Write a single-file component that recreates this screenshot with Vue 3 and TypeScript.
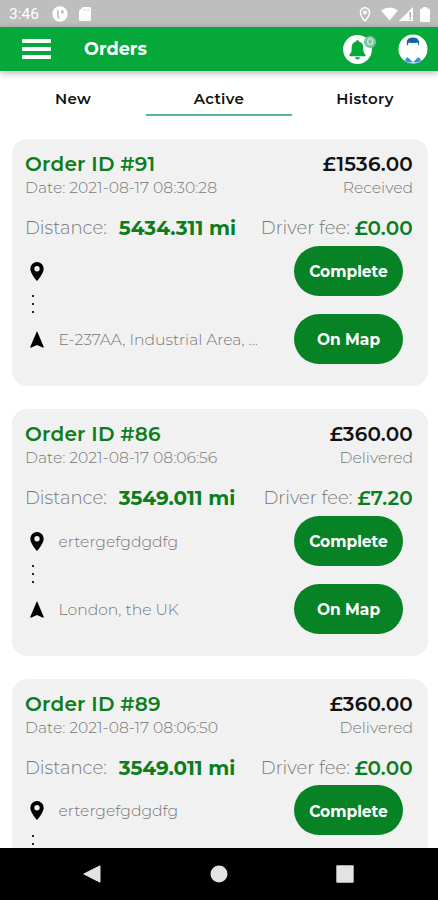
<script setup lang="ts">
interface Order {
  id: number
  date: string
  total: string
  status: string
  distance: string
  fee: string
  from: string
  to: string
}

const tabs: string[] = ['New', 'Active', 'History']
const activeTab = 'Active'

const orders: Order[] = [
  { id: 91, date: '2021-08-17 08:30:28', total: '£1536.00', status: 'Received', distance: '5434.311 mi', fee: '£0.00', from: '', to: 'E-237AA, Industrial Area, ...' },
  { id: 86, date: '2021-08-17 08:06:56', total: '£360.00', status: 'Delivered', distance: '3549.011 mi', fee: '£7.20', from: 'ertergefgdgdfg', to: 'London, the UK' },
  { id: 89, date: '2021-08-17 08:06:50', total: '£360.00', status: 'Delivered', distance: '3549.011 mi', fee: '£0.00', from: 'ertergefgdgdfg', to: '' },
]
</script>

<template>
  <div class="screen">
    <div class="status-bar">
      <span class="clock">3:46</span>
      <svg class="st-app" viewBox="0 0 16 16"><circle cx="8" cy="8" r="7.7" fill="#fff" /><path d="M5.800 4v5.500q0 2 1.700 2.800" fill="none" stroke="#bebebe" stroke-width="1.600" /><path d="M9 4.300h1.300q1.700 0 1.700 1.600t-1.700 1.600H9z" fill="#bebebe" /></svg>
      <svg class="st-sd" viewBox="0 0 12 14"><path d="M4 0h6.500Q12 0 12 1.500v11q0 1.500-1.500 1.500h-9Q0 14 0 12.500V4z" fill="#fff" /><path d="M5 1.800v2M7.200 1.800v2M9.400 1.800v2" stroke="#d0d0d0" stroke-width="1" /></svg>
      <span class="spacer"></span>
      <svg class="st-loc" viewBox="0 0 12 15"><path d="M6 .8a4.600 4.600 0 0 0-4.600 4.700C1.400 9 6 14 6 14s4.600-5 4.600-8.500A4.600 4.600 0 0 0 6 .8z" fill="none" stroke="#fff" stroke-width="1.400" /><circle cx="6" cy="5.500" r="2" fill="#fff" /></svg>
      <svg class="st-wifi" viewBox="0 0 18 14"><path d="M0 3.200Q9-3.200 18 3.200L9 14z" fill="#fff" /></svg>
      <svg class="st-cell" viewBox="0 0 14 14"><path d="M14 0v14H0z" fill="#fff" /><path d="M11.300 5v5.500M11.300 11.500v1.500" stroke="#aaa" stroke-width="1.500" /></svg>
      <svg class="st-bat" viewBox="0 0 10 15"><path d="M3 0h4v1.500h1.500Q10 1.500 10 3v10.500q0 1.500-1.500 1.500h-7Q0 15 0 13.500V3q0-1.500 1.500-1.500H3z" fill="#fff" /></svg>
    </div>

    <header class="app-bar">
      <div class="burger"><i></i><i></i><i></i></div>
      <h1 class="title">Orders</h1>
      <div class="bell">
        <svg viewBox="0 0 29 29"><circle cx="14.500" cy="14.500" r="14.400" fill="#fff" /><path d="M14.500 5.300c-1 0-1.600.6-1.600 1.400C9.500 7.400 8.700 10.200 8.700 13c0 4-.7 5.300-2.200 6.500v1.800h16v-1.800c-1.500-1.200-2.200-2.500-2.200-6.500 0-2.800-.8-5.600-4.200-6.300 0-.8-.6-1.400-1.600-1.400zM12 22.300h5q-.5 2.300-2.500 2.300T12 22.300z" fill="#05a839" /></svg>
        <span class="count">0</span>
      </div>
      <svg class="avatar" viewBox="0 0 30 30"><circle cx="15" cy="15" r="14.500" fill="#fff" /><path d="M9.500 12C7.500 7 10 3.500 14 3.500c5-.8 8.500 2.500 6.800 8.500l-1.300-3.500q-4.500 1-8.800 0z" fill="#17639f" /><path d="M7 26.500l2-3.500 2.500 1.800 3.500 3.700 3.500-3.700L21 23l2 3.500q-1.500 1.500-4 2h-8q-2.500-.5-4-2z" fill="#3590df" /></svg>
    </header>

    <nav class="tabs">
      <div v-for="tab in tabs" :key="tab" class="tab" :class="{ active: tab === activeTab }">{{ tab }}</div>
    </nav>

    <main class="list">
      <article v-for="order in orders" :key="order.id" class="card">
        <div class="row head">
          <span class="order-id">Order ID #{{ order.id }}</span>
          <span class="total">{{ order.total }}</span>
        </div>
        <div class="row meta">
          <span class="date">Date: {{ order.date }}</span>
          <span class="state">{{ order.status }}</span>
        </div>
        <div class="row figures">
          <span class="label">Distance:</span>
          <span class="distance">{{ order.distance }}</span>
          <span class="label fee-label">Driver fee:</span>
          <span class="fee">{{ order.fee }}</span>
        </div>
        <div class="body">
          <div class="route">
            <div class="stop">
              <svg class="pin" viewBox="0 0 14 19"><path fill-rule="evenodd" d="M7 0a6.700 6.700 0 0 0-6.700 6.700C.3 11.700 7 19 7 19s6.700-7.300 6.700-12.300A6.700 6.700 0 0 0 7 0zm0 4a2.700 2.700 0 1 1 0 5.400 2.700 2.700 0 0 1 0-5.400z" /></svg>
              <span class="address">{{ order.from }}</span>
            </div>
            <div class="dots"><i></i><i></i><i></i></div>
            <div class="stop">
              <svg class="arrow" viewBox="0 0 14 17"><path d="M7 0l6.800 16-.7.800L7 14 .9 16.800.2 16z" /></svg>
              <span class="address">{{ order.to }}</span>
            </div>
          </div>
          <div class="actions">
            <button class="btn" type="button">Complete</button>
            <button v-if="order.to" class="btn" type="button">On Map</button>
          </div>
        </div>
      </article>
    </main>

    <footer class="nav-bar">
      <svg viewBox="0 0 18 18"><path d="M17 .8v16.400L.8 9z" fill="#e3e3e3" stroke="#e3e3e3" stroke-linejoin="round" /></svg>
      <svg viewBox="0 0 18 18"><circle cx="9" cy="9" r="8.500" fill="#e3e3e3" /></svg>
      <svg viewBox="0 0 18 18"><rect x=".3" y=".3" width="17.400" height="17.400" rx="1" fill="#e3e3e3" /></svg>
    </footer>
  </div>
</template>

<style>
body {
  margin: 0;
  overflow: hidden;
}
</style>

<style scoped>
.screen {
  width: 438px;
  height: 900px;
  display: flex;
  flex-direction: column;
  overflow: hidden;
  background: #fff;
  font-family: Montserrat, Inter, sans-serif;
}
.status-bar {
  flex: none;
  height: 27px;
  box-sizing: border-box;
  padding: 1px 8px 0 9px;
  display: flex;
  align-items: center;
  background: #bebebe;
}
.clock {
  width: 43px;
  font: 15.5px Roboto, sans-serif;
  color: #fff;
}
.st-app { width: 16px; height: 16px; margin-right: 11px; }
.st-sd { width: 12px; height: 14px; }
.spacer { flex: 1; }
.st-loc { width: 12px; height: 15px; margin-right: 10px; }
.st-wifi { width: 17px; height: 14px; margin-right: 1px; }
.st-cell { width: 14px; height: 14px; margin-right: 7px; }
.st-bat { width: 10px; height: 15px; }
.app-bar {
  flex: none;
  height: 44px;
  box-sizing: border-box;
  padding: 0 10px 0 22px;
  display: flex;
  align-items: center;
  background: #05a839;
  box-shadow: 0 2px 7px rgba(0, 0, 0, 0.3);
  z-index: 1;
}
.burger {
  width: 29px;
  display: flex;
  flex-direction: column;
  gap: 4px;
}
.burger i {
  height: 4px;
  border-radius: 1px;
  background: #fff;
}
.title {
  flex: 1;
  margin: 0 0 0 33px;
  padding-bottom: 2px;
  color: #fff;
  font-size: 17.7px;
  font-weight: 700;
}
.bell {
  position: relative;
  width: 29px;
  height: 29px;
  margin-right: 26px;
}
.bell svg { display: block; width: 29px; height: 29px; }
.count {
  position: absolute;
  left: 21px;
  top: 1px;
  width: 12px;
  height: 12px;
  border-radius: 50%;
  background: #77c8a0;
  color: #fff;
  font-size: 10px;
  line-height: 12px;
  text-align: center;
}
.avatar { width: 30px; height: 30px; }
.tabs {
  flex: none;
  height: 45.4px;
  display: grid;
  grid-template-columns: repeat(3, 1fr);
}
.tab {
  height: 45.4px;
  box-sizing: border-box;
  padding-top: 18px;
  border-bottom: 2px solid transparent;
  font-size: 15px;
  font-weight: 600;
  line-height: 20px;
  letter-spacing: 0.35px;
  text-align: center;
  color: #111;
}
.tab.active { border-bottom-color: #58b78d; }
.list {
  flex: 1;
  min-height: 0;
  overflow: hidden;
  padding: 23px 10.5px 0 12px;
}
.card {
  height: 247px;
  box-sizing: border-box;
  margin-bottom: 22.8px;
  padding: 13px 14.5px 0 13px;
  border-radius: 15px;
  background: #f1f1f1;
}
.row {
  display: flex;
  align-items: center;
  white-space: nowrap;
}
.head { justify-content: space-between; height: 24px; }
.meta { justify-content: space-between; height: 23px; }
.order-id {
  color: #0b7d1d;
  font-size: 20px;
  font-weight: 650;
  letter-spacing: 0.2px;
}
.total {
  color: #111;
  font-size: 20px;
  font-weight: 600;
  letter-spacing: 0.2px;
}
.date,
.state {
  color: #777;
  font-size: 15.6px;
  font-weight: 300;
}
.figures { height: 34px; padding-top: 12px; }
.label {
  color: #777;
  font-size: 18px;
  font-weight: 300;
}
.distance {
  margin-left: 12px;
  color: #0b7d1d;
  font-size: 20px;
  font-weight: 700;
}
.fee-label { margin-left: auto; }
.fee {
  margin-left: 5px;
  color: #0b7d1d;
  font-size: 20px;
  font-weight: 650;
  letter-spacing: 0.2px;
}
.body {
  display: flex;
  justify-content: space-between;
  padding-right: 10px;
}
.route {
  width: 250px;
  padding: 16px 0 0 4.5px;
  box-sizing: border-box;
}
.stop {
  display: flex;
  align-items: center;
  height: 20px;
}
.pin { flex: none; width: 14px; height: 19px; }
.arrow { flex: none; width: 14px; height: 17px; }
.address {
  margin-left: 15px;
  white-space: nowrap;
  color: #777;
  font-size: 15.6px;
  font-weight: 300;
}
.dots {
  height: 48px;
  box-sizing: border-box;
  padding: 14px 0 0 2px;
  display: flex;
  flex-direction: column;
  gap: 6px;
}
.dots i { width: 2px; height: 2px; background: #222; }
.actions {
  display: flex;
  flex-direction: column;
  gap: 18px;
  margin-top: 0.5px;
}
.btn {
  width: 109px;
  height: 50px;
  padding: 2px 0 0;
  border: 0;
  border-radius: 25px;
  background: #078225;
  color: #fff;
  font-family: inherit;
  font-size: 15.5px;
  font-weight: 750;
}
.nav-bar {
  flex: none;
  height: 52.5px;
  display: flex;
  justify-content: space-between;
  align-items: center;
  box-sizing: border-box;
  padding: 0 84px 0 83px;
  background: #000;
}
.nav-bar svg { width: 18px; height: 18px; }
</style>
